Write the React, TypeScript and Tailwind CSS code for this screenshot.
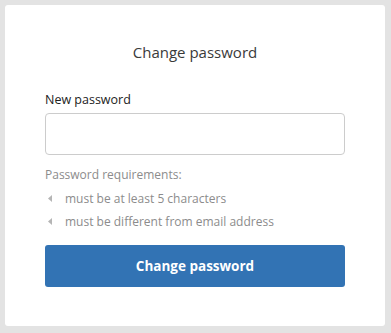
import React from "react";

const Bullet: React.FC<{ text: string }> = ({ text }) => (
    <li className="flex items-center h-[23px]">
        <svg width="4" height="7" viewBox="0 0 4 7" className="ml-[3px] mr-[13px] shrink-0">
            <polygon points="4,0 4,7 0,3.5" fill="#b5b5b5" />
        </svg>
        <span>{text}</span>
    </li>
);

export default function App() {
    return (
        <div
            className="h-[333px] w-[391px] bg-[#e3e3e3] pt-[5px] pl-[5px] pr-[6px] pb-[7px]"
            style={{ fontFamily: '"Open Sans", "Noto Sans", sans-serif' }}
        >
            <div className="h-full bg-white rounded-[3px] px-[40px] pt-[36px]">
                <h1 className="text-center text-[15px] leading-[22px] text-[#3a3a3a]">Change password</h1>

                <label className="block mt-[28px] text-[12.5px] leading-[18px] text-[#222]">New password</label>
                <input
                    type="password"
                    className="mt-[4px] block w-full h-[42px] rounded-[4px] border border-[#cccccc] bg-white px-3 outline-none"
                />

                <div className="mt-[11px] text-[12px] leading-[18px] text-[#8c8c8c]">
                    <div>Password requirements:</div>
                    <ul className="mt-[3px]">
                        <Bullet text="must be at least 5 characters" />
                        <Bullet text="must be different from email address" />
                    </ul>
                </div>

                <button
                    type="button"
                    className="mt-[12px] w-full h-[42px] rounded-[3px] bg-[#3273b4] text-white text-[13.5px] font-bold"
                >
                    Change password
                </button>
            </div>
        </div>
    );
}
